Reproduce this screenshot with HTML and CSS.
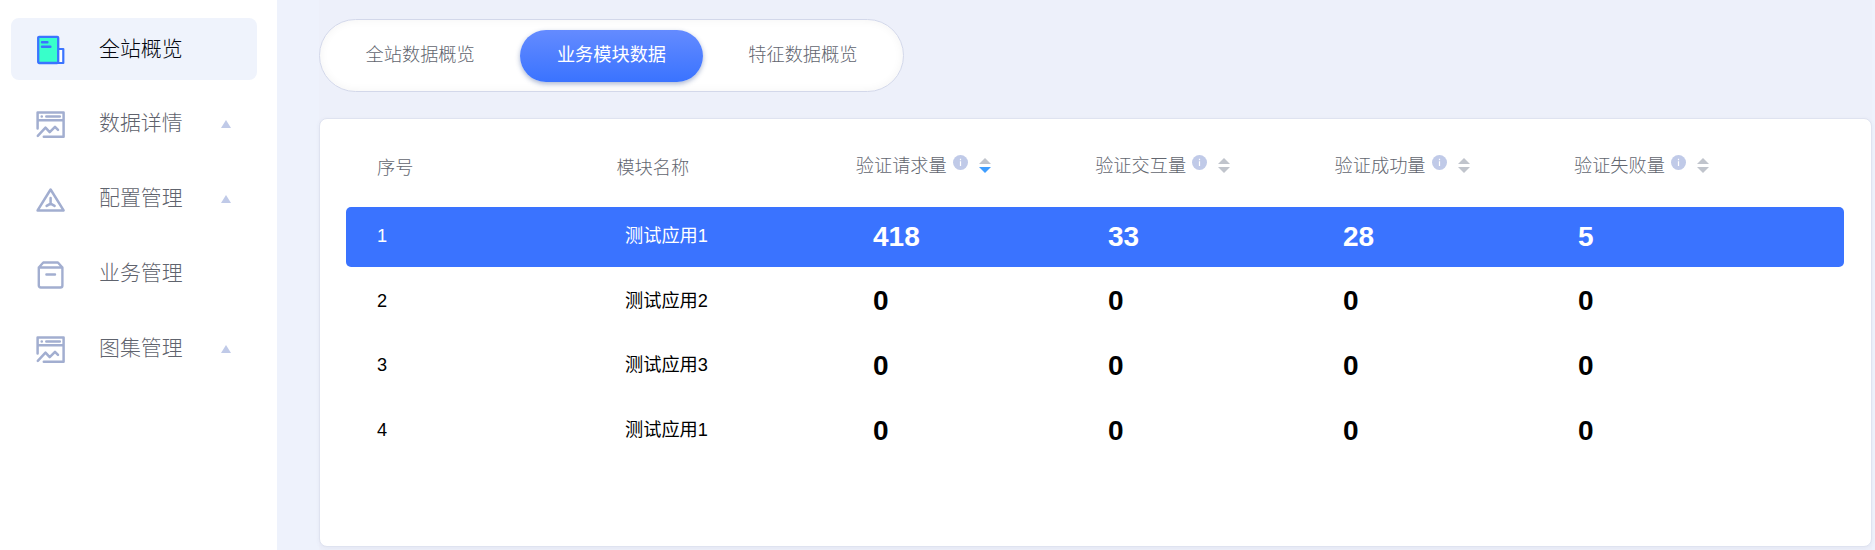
FILE: index.html
```html
<!DOCTYPE html>
<html lang="zh-CN">
<head>
<meta charset="utf-8">
<title>业务模块数据</title>
<link rel="stylesheet" href="styles.css">
</head>
<body>
<svg class="defs" width="0" height="0" aria-hidden="true">
  <symbol id="chart" viewBox="0 0 30 28"><path d="M1.6 17.5V1.6h26v24.2H7.8M1.6 9.2h26M1.8 24.8l7.7-8.1 4.2 4.5 5.3-5.3 3 3" fill="none" stroke="#a2aed0" stroke-width="2.5" stroke-linecap="round" stroke-linejoin="round"/><path d="M10.3 5.5H23.8M5.7 5.5h.1" stroke="#a2aed0" stroke-width="2.5" stroke-linecap="round"/></symbol>
  <symbol id="info" viewBox="0 0 16 16"><circle cx="8" cy="8" r="8" fill="#c0cae8"/><path d="M8 6.6v5M8 4.1v1.4" stroke="#fff" stroke-width="1.3"/></symbol>
</svg>
<div class="app">
  <nav class="sidebar">
    <a class="item active"><svg class="icon" viewBox="0 0 30 30"><path d="M22 14h5.3v14H22" fill="#fff" stroke="#3b74ff" stroke-width="2.2" stroke-linejoin="round"/><rect x="2.2" y="1.8" width="20" height="26.2" rx="1" fill="#38ffca" stroke="#3b74ff" stroke-width="2.3"/><path d="M6 7.3h5.4M6 11.8h8.4" stroke="#3b74ff" stroke-width="2.4" stroke-linecap="round"/></svg><span class="label">全站概览</span></a>
    <a class="item"><svg class="icon chart"><use href="#chart"/></svg><span class="label">数据详情</span><i class="caret"></i></a>
    <a class="item"><svg class="icon" viewBox="0 0 30 30"><path d="M14.6 4.5L27.6 25.4H1.6z" fill="none" stroke="#a2aed0" stroke-width="2.5" stroke-linejoin="round"/><path d="M14.6 13v5.7l-4 2.2M14.6 18.7l4 2.2" fill="none" stroke="#a2aed0" stroke-width="2.5" stroke-linecap="round"/></svg><span class="label">配置管理</span><i class="caret"></i></a>
    <a class="item"><svg class="icon" viewBox="0 0 30 30"><path d="M2.8 7.5h23.6v18q0 2-2 2H4.8q-2 0-2-2zL7.3 2.5h14.6l4.5 5M10.4 14.5h8.6" fill="none" stroke="#a2aed0" stroke-width="2.4" stroke-linecap="round" stroke-linejoin="round"/></svg><span class="label">业务管理</span></a>
    <a class="item"><svg class="icon chart"><use href="#chart"/></svg><span class="label">图集管理</span><i class="caret"></i></a>
  </nav>
  <main class="main">
    <div class="tabs">
      <a class="tab">全站数据概览</a>
      <a class="tab selected">业务模块数据</a>
      <a class="tab">特征数据概览</a>
    </div>
    <section class="card">
      <div class="head">
        <span class="plain">序号</span>
        <span class="plain">模块名称</span>
        <span class="sortable">验证请求量<svg class="info"><use href="#info"/></svg><i class="sort desc"></i></span>
        <span class="sortable">验证交互量<svg class="info"><use href="#info"/></svg><i class="sort"></i></span>
        <span class="sortable">验证成功量<svg class="info"><use href="#info"/></svg><i class="sort"></i></span>
        <span class="sortable">验证失败量<svg class="info"><use href="#info"/></svg><i class="sort"></i></span>
      </div>
      <div class="row current"><span>1</span><span>测试应用1</span><b>418</b><b>33</b><b>28</b><b>5</b></div>
      <div class="row"><span>2</span><span>测试应用2</span><b>0</b><b>0</b><b>0</b><b>0</b></div>
      <div class="row"><span>3</span><span>测试应用3</span><b>0</b><b>0</b><b>0</b><b>0</b></div>
      <div class="row"><span>4</span><span>测试应用1</span><b>0</b><b>0</b><b>0</b><b>0</b></div>
    </section>
  </main>
</div>
</body>
</html>
```
FILE: styles.css
```css
* { box-sizing: border-box; }
body {
  margin: 0;
  overflow: hidden;
  background: #eef2fc;
  color: #000;
  font: 18.2px/1.3 "Liberation Sans", "Noto Sans CJK SC", sans-serif;
}
.defs { display: none; }
.app { display: flex; height: 550px; }

.sidebar {
  display: flex;
  flex-direction: column;
  gap: 13px;
  width: 277px;
  padding: 18px 20px 0 11px;
  background: #fff;
}
.item {
  display: flex;
  align-items: center;
  height: 62px;
  padding: 0 26px 0 25px;
  border-radius: 8px;
  color: #5f636d;
  font-size: 20.9px;
  font-weight: 300;
}
.item.active { background: #eff3fc; color: #05070f; }
.icon { width: 30px; height: 30px; margin-top: 1px; }
.icon.chart { height: 28px; }
.label { margin-left: 33px; line-height: 30px; margin-bottom: 3px; }
.active .label { margin-bottom: 1px; }
.caret {
  margin: 0 0 0 auto;
  border: solid transparent;
  border-width: 0 5.5px 8px;
  border-bottom-color: #c0cae8;
}

.main {
  flex: 1;
  margin: 0 3px 0 42px;
  padding-top: 19px;
  background: #edf0fa;
}
.tabs {
  display: flex;
  align-items: center;
  gap: 9px;
  width: 585px;
  height: 73px;
  padding: 0 9px;
  border: 1px solid #d3d8ea;
  border-radius: 37px;
  background: #fff;
  box-shadow: inset 0 0 10px rgba(0, 0, 0, .05);
}
.tab {
  width: 183px;
  height: 52px;
  border-radius: 26px;
  color: #62666f;
  font-weight: 300;
  line-height: 50px;
  text-align: center;
}
.selected {
  background: linear-gradient(#648bff, #3a73ff);
  box-shadow: 0 2px 5px rgba(40, 70, 140, .4);
  color: #fff;
  font-weight: 400;
}

.card {
  height: 429px;
  margin: 26px 0 0;
  padding: 0 27px;
  border: 1px solid #dfe3f0;
  border-radius: 8px;
  background: #fff;
  box-shadow: 0 1px 4px rgba(60, 70, 120, .06);
}
.head {
  display: grid;
  grid-template-columns: repeat(6, 239.4px);
  height: 88px;
  padding: 35px 0 0 30px;
  color: #62666f;
  font-weight: 300;
  line-height: 24px;
}
.plain { padding-top: 2px; }
.sortable { display: flex; }
.info { width: 15px; height: 15px; margin: 1px 11px 0 6px; }
.sort {
  display: flex;
  flex-direction: column;
  gap: 3px;
  margin-top: 4px;
}
.sort::before, .sort::after {
  content: "";
  border: solid transparent;
  border-width: 0 6.5px 6px;
  border-bottom-color: #c0c4cc;
}
.sort::after { border-width: 6px 6.5px 0; border-top-color: #c0c4cc; }
.desc::after { border-top-color: #409eff; }

.row {
  display: grid;
  grid-template-columns: 248px 248px 235px 235px 235px 1fr;
  align-items: center;
  height: 60px;
  margin: 0 0 4.6px -1px;
  padding-left: 31px;
  border-radius: 5px;
}
.row span { margin-bottom: 0; }
.row b { font-size: 28px; }
.current { background: #3a73ff; color: #fff; }
```
